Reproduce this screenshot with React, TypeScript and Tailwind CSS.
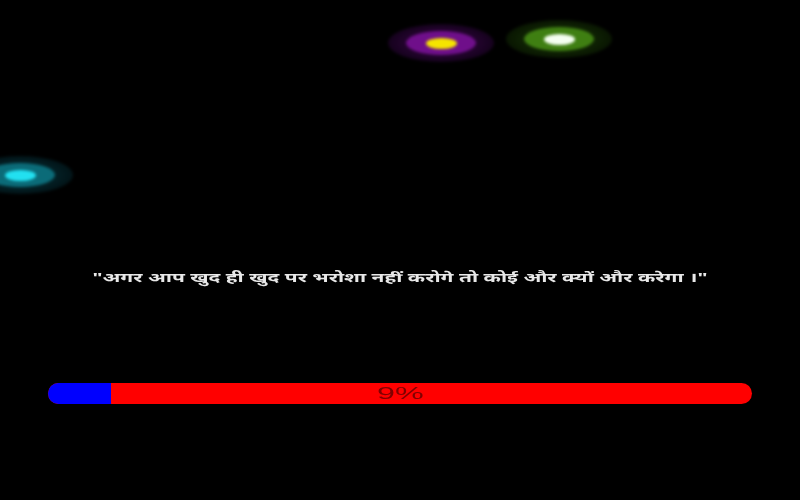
import React from "react";

type GlowProps = {
  core: string;
  ring: string;
  halo: string;
};

function Glow({ core, ring, halo }: GlowProps) {
  return (
    <div
      className="flex h-[38px] w-[106px] items-center justify-center rounded-[50%] blur-[1.5px]"
      style={{ background: halo }}
    >
      <div
        className="flex h-[24px] w-[70px] items-center justify-center rounded-[50%]"
        style={{ background: ring }}
      >
        <div className="h-[11px] w-[31px] rounded-[50%]" style={{ background: core }} />
      </div>
    </div>
  );
}

export default function App() {
  const progress = 9;

  return (
    <div className="relative h-[500px] w-[800px] overflow-hidden bg-black font-['Noto_Sans','Liberation_Sans',sans-serif]">
      <div className="absolute left-[388px] top-[24px]">
        <Glow core="#f5e400" ring="#6f0f8a" halo="radial-gradient(ellipse at center, rgba(90,10,110,0.7) 0%, rgba(60,5,80,0.45) 60%, rgba(20,0,30,0.2) 100%)" />
      </div>
      <div className="absolute left-[506px] top-[20px]">
        <Glow core="#f4fff0" ring="#3f7f12" halo="radial-gradient(ellipse at center, rgba(40,90,10,0.7) 0%, rgba(25,60,5,0.45) 60%, rgba(10,25,0,0.2) 100%)" />
      </div>
      <div className="absolute left-[-33px] top-[156px]">
        <Glow core="#22e0f0" ring="#0b6b78" halo="radial-gradient(ellipse at center, rgba(10,80,90,0.7) 0%, rgba(5,55,65,0.45) 60%, rgba(0,25,30,0.2) 100%)" />
      </div>

      <div className="flex h-full flex-col items-center">
        <p className="mt-[268px] origin-center scale-x-[1.61] whitespace-nowrap text-[13px] font-bold leading-[18px] text-[#e8e8e8]">
          "अगर आप खुद ही खुद पर भरोशा नहीं करोगे तो कोई और क्यों और करेगा ।"
        </p>

        <div className="relative mt-[97px] h-[21px] w-[704px] overflow-hidden rounded-full bg-[#ff0000]">
          <div className="h-full bg-[#0000ff]" style={{ width: `${progress}%` }} />
          <span className="absolute inset-0 flex items-center justify-center">
            <span className="scale-x-[1.9] font-['Liberation_Sans',sans-serif] text-[17px] leading-none text-[#800000]">
              {progress}%
            </span>
          </span>
        </div>
      </div>
    </div>
  );
}
